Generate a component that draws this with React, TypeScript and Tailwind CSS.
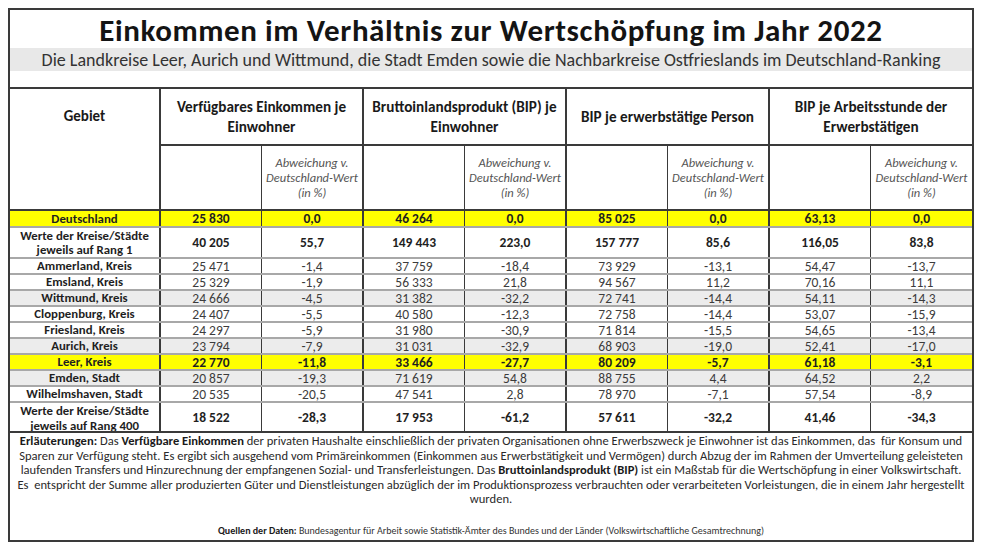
import React from "react";

type Row = {
  name: string[];
  vals: string[];
  kind: "yellow" | "bold" | "white" | "gray";
  h: string;
  clip?: boolean;
};

const rows: Row[] = [
  { name: ["Deutschland"], vals: ["25 830", "0,0", "46 264", "0,0", "85 025", "0,0", "63,13", "0,0"], kind: "yellow", h: "h-[17px]" },
  { name: ["Werte der Kreise/Städte", "jeweils auf Rang 1"], vals: ["40 205", "55,7", "149 443", "223,0", "157 777", "85,6", "116,05", "83,8"], kind: "bold", h: "h-[31px]" },
  { name: ["Ammerland, Kreis"], vals: ["25 471", "-1,4", "37 759", "-18,4", "73 929", "-13,1", "54,47", "-13,7"], kind: "white", h: "h-[16px]" },
  { name: ["Emsland, Kreis"], vals: ["25 329", "-1,9", "56 333", "21,8", "94 567", "11,2", "70,16", "11,1"], kind: "white", h: "h-[16px]" },
  { name: ["Wittmund, Kreis"], vals: ["24 666", "-4,5", "31 382", "-32,2", "72 741", "-14,4", "54,11", "-14,3"], kind: "gray", h: "h-[16px]" },
  { name: ["Cloppenburg, Kreis"], vals: ["24 407", "-5,5", "40 580", "-12,3", "72 758", "-14,4", "53,07", "-15,9"], kind: "white", h: "h-[16px]" },
  { name: ["Friesland, Kreis"], vals: ["24 297", "-5,9", "31 980", "-30,9", "71 814", "-15,5", "54,65", "-13,4"], kind: "white", h: "h-[16px]" },
  { name: ["Aurich, Kreis"], vals: ["23 794", "-7,9", "31 031", "-32,9", "68 903", "-19,0", "52,41", "-17,0"], kind: "gray", h: "h-[16px]" },
  { name: ["Leer, Kreis"], vals: ["22 770", "-11,8", "33 466", "-27,7", "80 209", "-5,7", "61,18", "-3,1"], kind: "yellow", h: "h-[16px]" },
  { name: ["Emden, Stadt"], vals: ["20 857", "-19,3", "71 619", "54,8", "88 755", "4,4", "64,52", "2,2"], kind: "gray", h: "h-[16px]" },
  { name: ["Wilhelmshaven, Stadt"], vals: ["20 535", "-20,5", "47 541", "2,8", "78 970", "-7,1", "57,54", "-8,9"], kind: "white", h: "h-[16px]" },
  { name: ["Werte der Kreise/Städte", "jeweils auf Rang 400"], vals: ["18 522", "-28,3", "17 953", "-61,2", "57 611", "-32,2", "41,46", "-34,3"], kind: "bold", h: "h-[30px]", clip: true },
];

const groupHeads = [
  ["Verfügbares Einkommen je", "Einwohner"],
  ["Bruttoinlandsprodukt (BIP) je", "Einwohner"],
  ["BIP je erwerbstätige Person"],
  ["BIP je Arbeitsstunde der", "Erwerbstätigen"],
];

export default function App() {
  return (
    <div
      className="w-[983px] h-[553px] bg-white pt-[8px] pl-[8px]"
      style={{ fontFamily: "Carlito, Lato, 'Open Sans', sans-serif" }}
    >
      <div className="w-[966px] h-[534px] border-2 border-[#3a3a3a] flex flex-col overflow-hidden">
        <div className="h-[38px] shrink-0 flex items-center justify-center text-[31px] tracking-[0.6px] font-bold text-[#141414] leading-none pt-[2px]">
          Einkommen im Verhältnis zur Wertschöpfung im Jahr 2022
        </div>
        <div className="h-[23px] shrink-0 bg-[#e8e8e8] flex items-center justify-center text-[18px] text-[#333] leading-none">
          Die Landkreise Leer, Aurich und Wittmund, die Stadt Emden sowie die Nachbarkreise Ostfrieslands im Deutschland-Ranking
        </div>
        <div className="h-[16px] shrink-0" />
        <table className="w-full table-fixed border-collapse shrink-0">
          <colgroup>
            <col className="w-[150px]" />
            <col />
            <col />
            <col />
            <col />
            <col />
            <col />
            <col />
            <col />
          </colgroup>
          <thead>
            <tr className="h-[57px]">
              <th
                rowSpan={2}
                className="border-t-2 border-b-2 border-r-2 border-[#3a3a3a] text-[15px] leading-[20px] font-bold text-[#1a1a1a] align-top pt-[17px]"
              >
                Gebiet
              </th>
              {groupHeads.map((g, i) => (
                <th
                  key={i}
                  colSpan={2}
                  className={
                    "border-t-2 border-b-2 border-[#3a3a3a] text-[15.2px] font-bold text-[#1a1a1a] leading-[20px] align-middle whitespace-nowrap " +
                    (i < 3 ? "border-r-2" : "")
                  }
                >
                  {g.map((l, j) => (
                    <div key={j}>{l}</div>
                  ))}
                </th>
              ))}
            </tr>
            <tr className="h-[65px]">
              {[0, 1, 2, 3].map((i) => (
                <React.Fragment key={i}>
                  <th className="border-r border-b-2 border-[#3a3a3a]" />
                  <th
                    className={
                      "border-b-2 border-[#3a3a3a] text-[12.5px] font-normal italic text-[#555] leading-[15px] align-middle " +
                      (i < 3 ? "border-r-2" : "")
                    }
                  >
                    <div>Abweichung v.</div>
                    <div>Deutschland-Wert</div>
                    <div>(in %)</div>
                  </th>
                </React.Fragment>
              ))}
            </tr>
          </thead>
          <tbody>
            {rows.map((r, ri) => {
              const bg =
                r.kind === "yellow" ? "bg-[#ffff00]" : r.kind === "gray" ? "bg-[#ececec]" : "bg-white";
              const isBoldVals = r.kind === "yellow" || r.kind === "bold";
              const last = ri === rows.length - 1;
              const bottom = last ? "border-b-2 border-b-[#3a3a3a]" : "border-b-2 border-b-[#a8a8a8]";
              return (
                <tr key={ri} className={bg + " " + r.h}>
                  <td
                    className={
                      "p-0 text-center text-[12.8px] font-bold text-[#1f1f1f] border-r-2 border-r-[#3a3a3a] whitespace-nowrap " +
                      (r.clip ? "align-top " : "leading-[14px] ") +
                      bottom
                    }
                  >
                    {r.clip ? (
                      <div className="h-[28px] overflow-hidden leading-[15px]">
                        {r.name.map((n, k) => (
                          <div key={k}>{n}</div>
                        ))}
                      </div>
                    ) : (
                      r.name.map((n, k) => <div key={k}>{n}</div>)
                    )}
                  </td>
                  {r.vals.map((v, vi) => (
                    <td
                      key={vi}
                      className={
                        "p-0 text-center text-[13.5px] leading-[13px] " +
                        (isBoldVals ? "font-bold text-[#1f1f1f] " : "text-[#3c3c3c] ") +
                        (vi === 7 ? "" : vi % 2 === 1 ? "border-r-2 border-r-[#3a3a3a] " : "border-r border-r-[#3a3a3a] ") +
                        bottom
                      }
                    >
                      {v}
                    </td>
                  ))}
                </tr>
              );
            })}
          </tbody>
        </table>
        <div className="flex-1 flex flex-col items-center pt-[1px] text-[12.55px] leading-[14.5px] text-[#2a2a2a]">
          <div className="whitespace-nowrap">
            <b className="text-[#1a1a1a]">Erläuterungen:</b> Das <b className="text-[#1a1a1a]">Verfügbare Einkommen</b> der privaten Haushalte einschließlich der privaten Organisationen ohne Erwerbszweck je Einwohner ist das Einkommen, das&nbsp; für Konsum und
          </div>
          <div className="whitespace-nowrap">
            Sparen zur Verfügung steht. Es ergibt sich ausgehend vom Primäreinkommen (Einkommen aus Erwerbstätigkeit und Vermögen) durch Abzug der im Rahmen der Umverteilung geleisteten
          </div>
          <div className="whitespace-nowrap">
            laufenden Transfers und Hinzurechnung der empfangenen Sozial- und Transferleistungen. Das <b className="text-[#1a1a1a]">Bruttoinlandsprodukt (BIP)</b> ist ein Maßstab für die Wertschöpfung in einer Volkswirtschaft.
          </div>
          <div className="whitespace-nowrap">
            Es&nbsp; entspricht der Summe aller produzierten Güter und Dienstleistungen abzüglich der im Produktionsprozess verbrauchten oder verarbeiteten Vorleistungen, die in einem Jahr hergestellt
          </div>
          <div className="whitespace-nowrap">wurden.</div>
          <div className="mt-[18px] text-[10px] leading-[12px] text-[#333] whitespace-nowrap">
            <b className="text-[#1a1a1a]">Quellen der Daten:</b> Bundesagentur für Arbeit sowie Statistik-Ämter des Bundes und der Länder (Volkswirtschaftliche Gesamtrechnung)
          </div>
        </div>
      </div>
    </div>
  );
}
